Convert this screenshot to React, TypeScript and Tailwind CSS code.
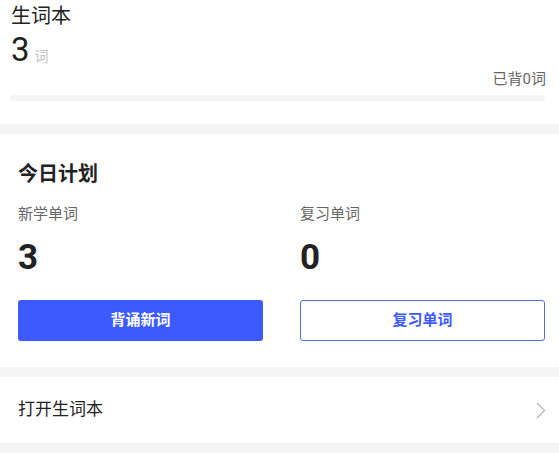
import React from 'react';

const font = { fontFamily: "Roboto, 'Noto Sans CJK SC', sans-serif" };

const App: React.FC = () => {
  return (
    <div className="w-[559px] h-[453px] bg-[#f5f5f6] overflow-hidden" style={font}>
      {/* vocabulary book summary */}
      <div className="bg-white h-[124px] px-[11px] pt-0">
        <div className="text-[20px] leading-[32px] text-[#222]">生词本</div>
        <div className="flex items-baseline gap-[5px] mt-[1px]">
          <span className="text-[33px] leading-[34px] font-normal text-[#222]">3</span>
          <span className="text-[14px] text-[#c4c4c4]">词</span>
        </div>
        <div className="text-right text-[15px] leading-[20px] text-[#666] pr-[2px] mt-[2px]">已背0词</div>
        <div className="h-[6px] bg-[#f5f5f5] rounded-full mt-[6px] mr-[3px] ml-[-1px]"></div>
      </div>

      {/* today's plan */}
      <div className="bg-white mt-[10px] h-[233px] pl-[18px] pr-[14px] pt-[26px]">
        <div className="text-[20px] leading-[28px] font-bold text-[#222]">今日计划</div>
        <div className="grid grid-cols-2 gap-[37px] mt-[16px]">
          <div className="flex flex-col">
            <span className="text-[15px] leading-[20px] text-[#666]">新学单词</span>
            <span className="text-[35px] leading-[44px] font-bold text-[#222] mt-[12px]">3</span>
            <button className="mt-[20px] h-[41px] rounded-[3px] bg-[#3d5afe] text-white text-[15px] font-bold">
              背诵新词
            </button>
          </div>
          <div className="flex flex-col">
            <span className="text-[15px] leading-[20px] text-[#666]">复习单词</span>
            <span className="text-[35px] leading-[44px] font-bold text-[#222] mt-[12px]">0</span>
            <button className="mt-[20px] h-[41px] rounded-[3px] border border-[#5470d6] bg-white text-[#3d5afe] text-[15px] font-bold">
              复习单词
            </button>
          </div>
        </div>
      </div>

      {/* open vocabulary book */}
      <div className="bg-white mt-[10px] h-[66px] pl-[18px] pr-[13px] flex items-center justify-between">
        <span className="text-[17px] text-[#222]">打开生词本</span>
        <svg width="10" height="17" viewBox="0 0 10 17" fill="none">
          <path d="M1 1l7.5 7.5L1 16" stroke="#b5b5b5" strokeWidth="1.2" />
        </svg>
      </div>
    </div>
  );
};

export default App;
